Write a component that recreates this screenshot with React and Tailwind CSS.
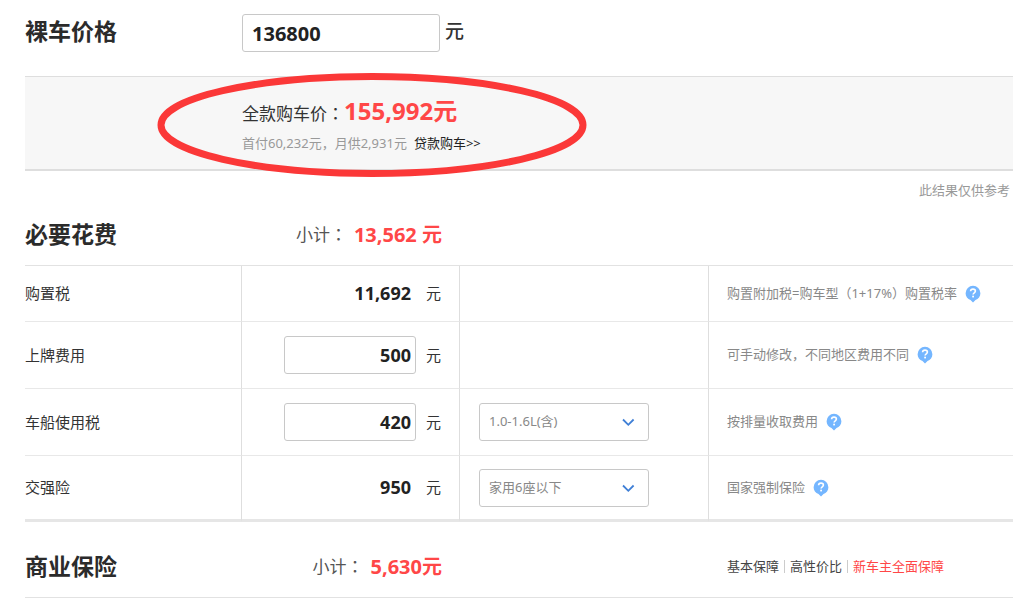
import { useState } from "react";

const fees = [
  {
    id: "purchase-tax",
    name: "购置税",
    value: "11,692",
    note: "购置附加税=购车型（1+17%）购置税率",
    height: "h-[56px]",
  },
  {
    id: "plate",
    name: "上牌费用",
    value: "500",
    editable: true,
    note: "可手动修改，不同地区费用不同",
    height: "h-[67px]",
  },
  {
    id: "vessel-tax",
    name: "车船使用税",
    value: "420",
    editable: true,
    options: ["1.0-1.6L(含)", "1.6-2.0L(含)", "2.0-2.5L(含)"],
    note: "按排量收取费用",
    height: "h-[67px]",
  },
  {
    id: "compulsory",
    name: "交强险",
    value: "950",
    options: ["家用6座以下", "家用6座及以上"],
    note: "国家强制保险",
    height: "h-[66px]",
    last: true,
  },
];

// The TC face centres the full-width colon in its cell
const Colon = () => <span className="font-['Noto_Sans_CJK_TC',sans-serif]">：</span>;

const HelpButton = ({ label }) => (
  <button type="button" aria-label={label} className="shrink-0">
    <svg width="16" height="18" viewBox="0 0 16 18" aria-hidden="true">
      <path
        d="M8 .8a7.4 7.4 0 0 1 7.400 7.400c0 3.200-2 5.800-4.900 6.800L8 17.600l-2.500-2.600C2.600 14 .6 11.400.6 8.200A7.400 7.400 0 0 1 8 .8z"
        fill="#74b6ff"
      />
      <path
        d="M5.600 6.300c0-1.400 1-2.200 2.400-2.200s2.400.8 2.400 2c0 1.700-2.300 1.700-2.300 3.500"
        fill="none"
        stroke="#fff"
        strokeWidth="1.600"
      />
      <rect x="7.200" y="10.700" width="1.800" height="1.700" fill="#fff" />
    </svg>
  </button>
);

const OptionSelect = ({ id, label, options }) => (
  <div className="relative w-[170px]">
    <select
      id={id}
      aria-label={label}
      className="h-[38px] w-full appearance-none rounded-[3px] border border-[#c8c8c8] bg-white pl-[9px] text-[13px] text-[#888]"
    >
      {options.map((option) => (
        <option key={option}>{option}</option>
      ))}
    </select>
    <svg
      className="pointer-events-none absolute right-[14px] top-[15px]"
      width="13"
      height="9"
      viewBox="0 0 13 9"
      aria-hidden="true"
    >
      <path d="M1 1.500l5.300 5.300 5.300-5.300" fill="none" stroke="#3f7fd6" strokeWidth="1.800" />
    </svg>
  </div>
);

const FeeRow = ({ fee }) => {
  const [value, setValue] = useState(fee.value);
  const bottom = fee.last ? "border-b-3 border-b-[#e6e6e6]" : "border-b border-b-[#e8e8e8]";
  const cell = `${bottom} border-r border-r-[#dedede]`;

  return (
    <tr className={fee.height}>
      <th scope="row" className={`${cell} text-left text-[15px] font-normal text-[#333]`}>
        {fee.name}
      </th>
      <td className={`${cell} pr-[18px]`}>
        <div className="flex items-center justify-end gap-[10px] text-[15px] text-[#333]">
          {fee.editable ? (
            <input
              type="text"
              aria-label={fee.name}
              value={value}
              onChange={(event) => setValue(event.target.value)}
              className="h-[38px] w-[132px] rounded-[3px] border border-[#c8c8c8] pr-[4px] text-right text-[18px] font-bold text-[#222]"
            />
          ) : (
            <span className="pr-[5px] text-[18px] font-bold text-[#222]">{value}</span>
          )}
          <span>元</span>
        </div>
      </td>
      <td className={`${cell} pl-[19px]`}>
        {fee.options && (
          <OptionSelect id={fee.id} label={`${fee.name}选项`} options={fee.options} />
        )}
      </td>
      <td className={`${bottom} pl-[18px]`}>
        <div className="flex items-center gap-2 whitespace-nowrap text-[13px] text-[#888]">
          <span>{fee.note}</span>
          <HelpButton label={`${fee.name}说明`} />
        </div>
      </td>
    </tr>
  );
};

const SectionHeader = ({ title, total, children }) => (
  <div className="flex h-[62px] items-center border-b border-[#e2e2e2]">
    <h2 className="w-[217px] text-[23px] font-bold text-[#2b2b2b]">{title}</h2>
    <p className="flex w-[218px] items-center justify-end gap-[7px] pr-[18px] text-[17px] text-[#555]">
      <span>
        小计
        <Colon />
      </span>
      <strong className="whitespace-pre text-[20px] text-[#ff4747]">{total}</strong>
    </p>
    <div className="flex-1 pl-[267px]">{children}</div>
  </div>
);

const App = () => {
  const [price, setPrice] = useState("136800");

  return (
    <main className="overflow-hidden bg-white pl-[25px] font-['Noto_Sans','Noto_Sans_CJK_SC',sans-serif] text-[#333]">
      <div className="flex items-start pb-6 pt-[14px] leading-[34px]">
        <label htmlFor="price" className="w-[217px] text-[23px] font-bold text-[#2b2b2b]">
          裸车价格
        </label>
        <input
          id="price"
          type="text"
          value={price}
          onChange={(event) => setPrice(event.target.value)}
          className="h-[38px] w-[198px] rounded-[3px] border border-[#c8c8c8] pl-[9px] text-[20px] font-bold text-[#222]"
        />
        <span className="pl-[5px] text-[19px] font-medium">元</span>
      </div>

      <section className="relative h-[95px] border-b-2 border-t border-b-[#dedede] border-t-[#dedede] bg-[#f7f7f7] pl-[217px] pt-[17px]">
        <p className="flex h-[34px] items-baseline text-[17px] leading-[34px]">
          全款购车价
          <Colon />
          <strong className="text-[24px] text-[#ff4747]">155,992元</strong>
        </p>
        <p className="text-[13px] leading-[30px] text-[#999]">
          首付60,232元，月供2,931元
          <a href="#loan" className="pl-[7px] text-[#222]">
            贷款购车&gt;&gt;
          </a>
        </p>
        <svg
          className="pointer-events-none absolute -top-[5px] left-[131px]"
          width="433"
          height="107"
          viewBox="0 0 433 107"
          aria-hidden="true"
        >
          <ellipse cx="216" cy="53" rx="211" ry="48.500" fill="none" stroke="#fb3838" strokeWidth="7" />
        </svg>
      </section>

      <p className="h-[33px] pr-[3px] pt-[9px] text-right text-[13px] leading-5 text-[#999]">
        此结果仅供参考
      </p>

      <SectionHeader title="必要花费" total="13,562 元" />
      <table className="w-full table-fixed border-separate border-spacing-0">
        <colgroup>
          <col className="w-[217px]" />
          <col className="w-[218px]" />
          <col className="w-[249px]" />
          <col />
        </colgroup>
        <tbody>
          {fees.map((fee) => (
            <FeeRow key={fee.id} fee={fee} />
          ))}
        </tbody>
      </table>

      <div className="pt-[14px]">
        <SectionHeader title="商业保险" total="5,630元">
          <nav className="flex items-center gap-[5px] whitespace-nowrap text-[13px] text-[#444]">
            <a href="#basic">基本保障</a>
            <span className="h-[13px] w-px bg-[#ccc]" />
            <a href="#value">高性价比</a>
            <span className="h-[13px] w-px bg-[#ccc]" />
            <a href="#full" className="text-[#ff4747]">
              新车主全面保障
            </a>
          </nav>
        </SectionHeader>
      </div>
    </main>
  );
};

export default App;
